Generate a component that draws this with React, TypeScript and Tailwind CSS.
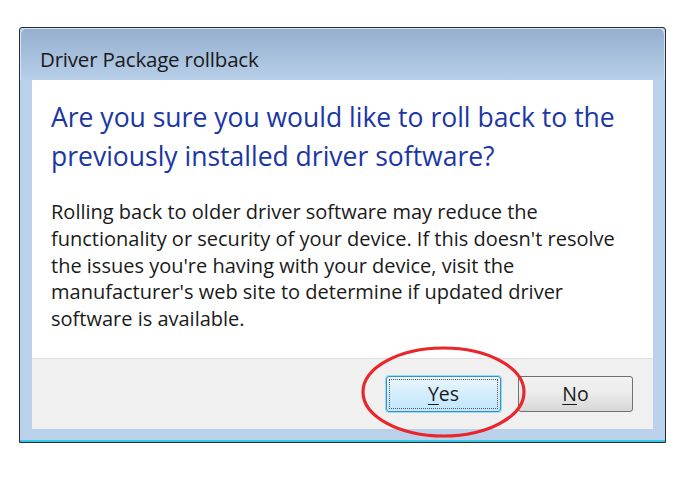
import React from "react";

export default function App() {
  const font = { fontFamily: '"Open Sans", "Noto Sans", sans-serif' };
  return (
    <div className="relative w-[700px] h-[480px] bg-white overflow-hidden" style={font}>
      <div className="pt-[27px] pl-[19px]">
        <div className="w-[647px] h-[416px] border border-[#2b2b2b] rounded-tl-[3px] rounded-tr-[3px] bg-[#b9d1ea] flex flex-col">
          {/* title bar */}
          <div className="h-[52px] shrink-0 bg-gradient-to-b from-[#95afce] to-[#b7cfe9] rounded-tl-[6px] rounded-tr-[6px] border-t border-l border-r border-[#d7e4f3] pl-[19px] pt-[18px]">
            <div className="text-[20.5px] leading-[24px] text-[#1a1a1a] tracking-[-0.2px] whitespace-nowrap">Driver Package rollback</div>
          </div>
          {/* client */}
          <div className="mx-[12px] flex flex-col">
            <div className="h-[278px] bg-white pl-[19px] pr-[10px] pt-[18px]">
              <div className="text-[26.5px] leading-[39px] text-[#1b36a5] whitespace-nowrap">
                <div>Are you sure you would like to roll back to the</div>
                <div>previously installed driver software?</div>
              </div>
              <div className="mt-[23px] text-[20px] leading-[26.8px] text-[#1a1a1a] whitespace-nowrap">
                <div>Rolling back to older driver software may reduce the</div>
                <div>functionality or security of your device. If this doesn't resolve</div>
                <div>the issues you're having with your device, visit the</div>
                <div>manufacturer's web site to determine if updated driver</div>
                <div>software is available.</div>
              </div>
            </div>
            <div className="h-[71px] bg-[#f0f0f0] border-t border-[#dfdfdf] flex justify-end items-start pt-[17px] pr-[20px] gap-[17px]">
              <button className="w-[115px] h-[36px] rounded-[3px] border border-[#3d8fc8] shadow-[0_0_0_1px_#8fe0f5] bg-gradient-to-b from-[#eaf6fd] to-[#bee6fd] p-[2px]">
                <div className="w-full h-full border border-dotted border-[#6b5050] flex items-center justify-center text-[19.5px] text-[#1a1a1a]">
                  <span><span className="underline underline-offset-[3px]">Y</span>es</span>
                </div>
              </button>
              <button className="w-[115px] h-[36px] rounded-[3px] border border-[#707070] bg-gradient-to-b from-[#f2f2f2] via-[#ebebeb] to-[#d6d6d6] flex items-center justify-center text-[19.5px] text-[#1a1a1a]">
                <span><span className="underline underline-offset-[3px]">N</span>o</span>
              </button>
            </div>
          </div>
          <div className="flex-1" />
          <div className="h-[2px] bg-[#37c8e8]" />
        </div>
      </div>
      <svg className="absolute left-0 top-0 pointer-events-none" width="700" height="480">
        <ellipse cx="443.5" cy="392" rx="80.5" ry="44" fill="none" stroke="#e8262b" strokeWidth="3.2" />
      </svg>
    </div>
  );
}
